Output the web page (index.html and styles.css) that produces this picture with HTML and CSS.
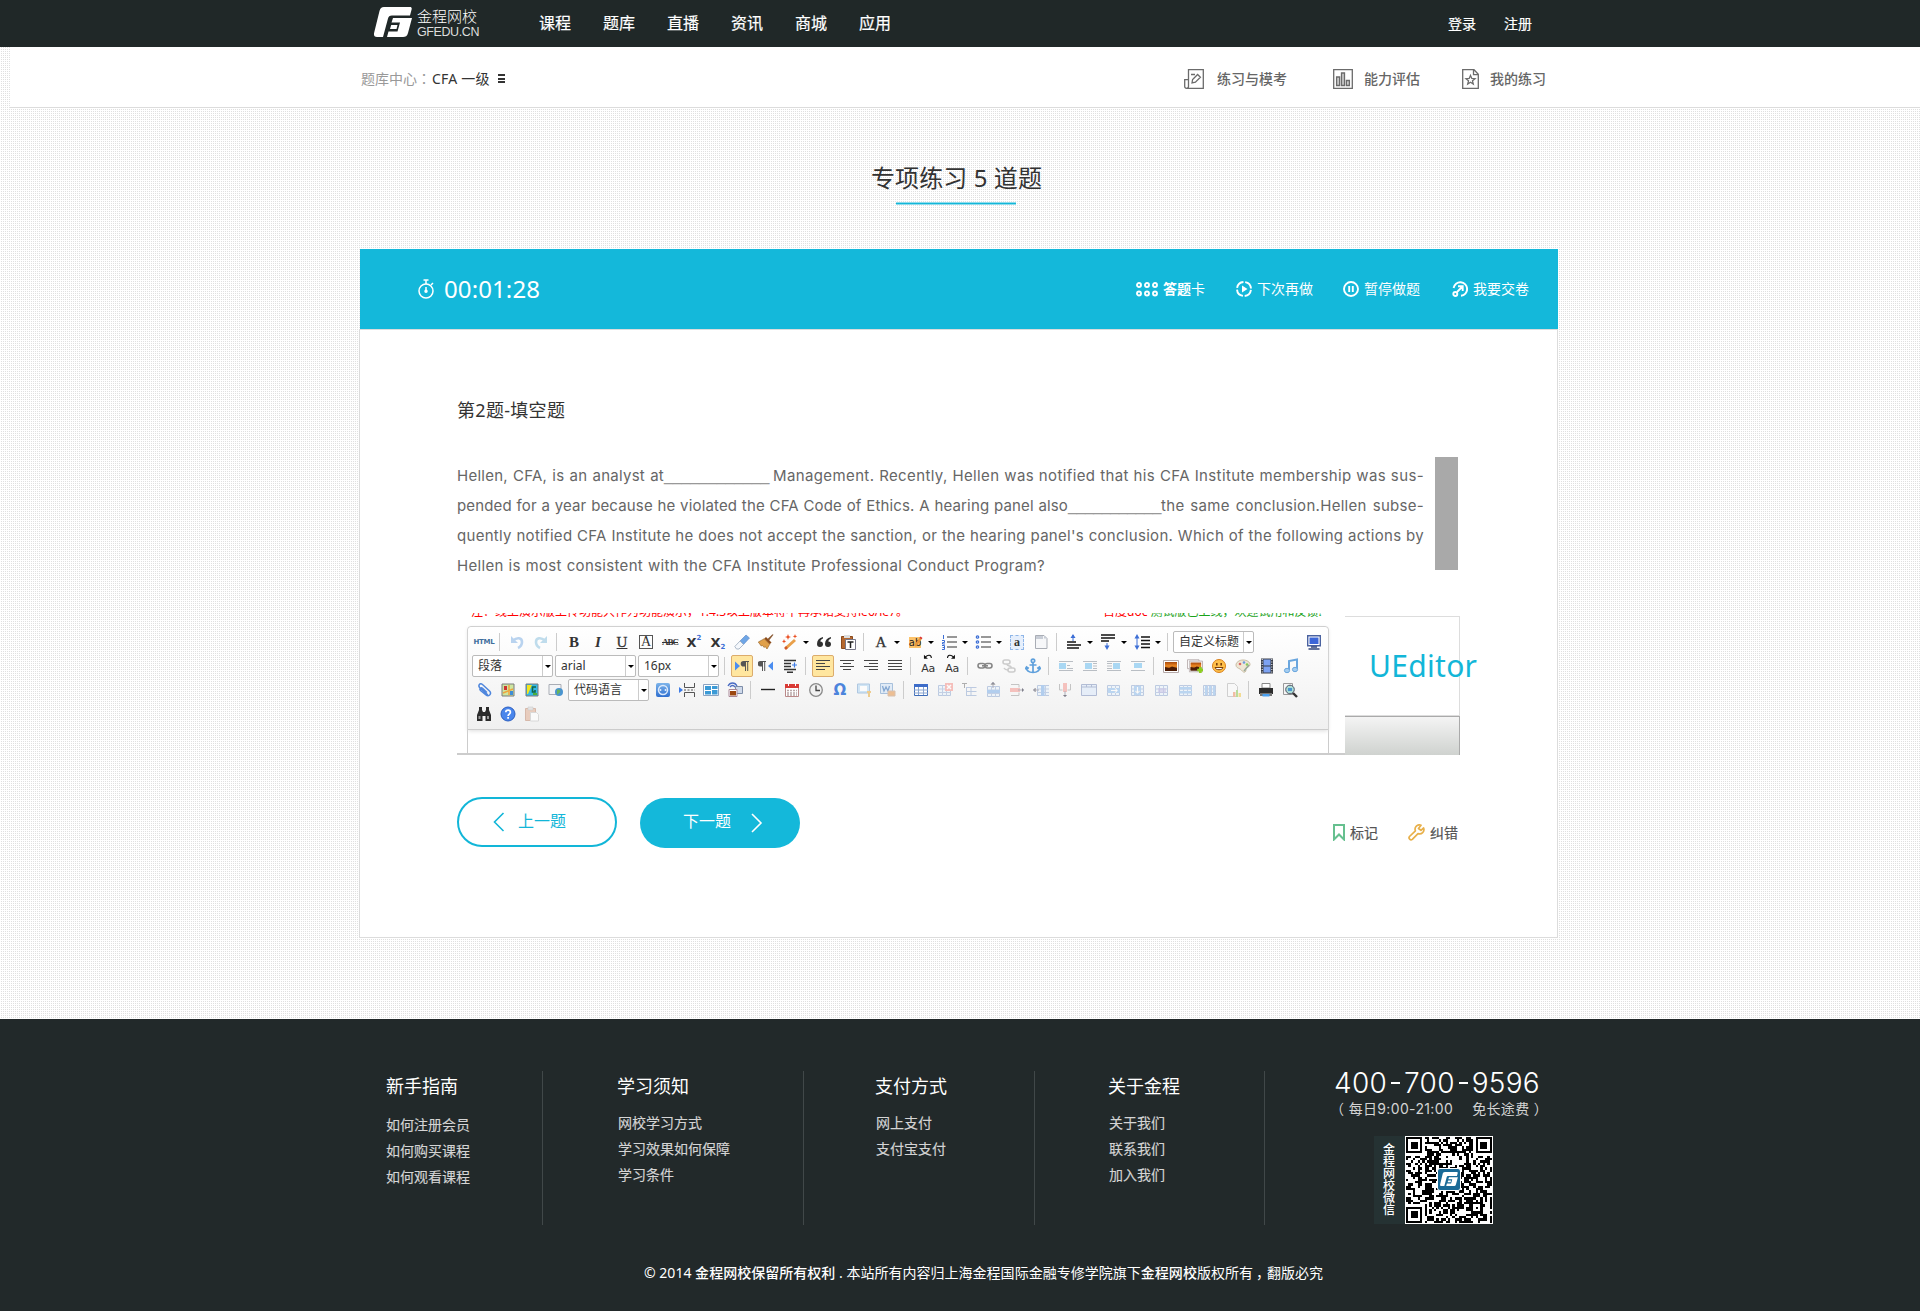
FILE: index.html
```html
<!DOCTYPE html>
<html lang="zh-CN">
<head>
<meta charset="utf-8">
<title>金程网校 - 专项练习</title>
<link rel="stylesheet" href="styles.css">
</head>
<body>
<svg class="sprite" aria-hidden="true">
  <defs>
    <linearGradient id="sky" x1="0" y1="0" x2="0" y2="1"><stop offset="0" stop-color="#7db4ea"/><stop offset="1" stop-color="#2f6fd0"/></linearGradient>
    <linearGradient id="sunset" x1="0" y1="0" x2="0" y2="1"><stop offset="0" stop-color="#a8480c"/><stop offset=".45" stop-color="#f08a22"/><stop offset="1" stop-color="#5b2306"/></linearGradient>
    <symbol id="gmark" viewBox="0 0 38 30"><path d="M10 0H36C37.500 0 38 1 37.600 2.500L36 8.500H18C15.500 8.500 14.500 9.500 14 11.500L9 30H3C0 30-.5 28 .2 25.500L5.500 4C6.200 1.500 7.500 0 10 0Z"/><path d="M19 11H38L34 26C33.200 29 31.500 30 29 30H13L14.500 24.500H23.500L26 15.500H17.500ZM17.200 18H23.500L22.500 22H16Z"/></symbol>
    <symbol id="para" viewBox="0 0 16 16"><path d="M12 3H6.500a2.800 2.800 0 0 0 0 5.600H8V13h1V4h1.200v9h1V4H12Z"/></symbol>
    <symbol id="grid" viewBox="0 0 16 16"><path fill="#eaf3fb" stroke="#9fb4d6" d="M2.500 3.500h12v10h-12z"/><path fill="none" stroke="#a9bcdc" d="M2 7h13M2 10.500h13M6.500 3v11M10.500 3v11"/></symbol>
    <symbol id="float" viewBox="0 0 16 16"><path stroke="#b9bec4" d="M1 3.500h14M1 12.500h14"/></symbol>
    <symbol id="pic" viewBox="0 0 16 16"><path fill="#fff" stroke="#b5a9a9" d="M.5 2.500h15v12H.5z"/><path fill="url(#sunset)" d="M2 4h12v9H2z"/><path fill="#4b1c06" d="M2 9l4 1 3-1.500 5 1.500v3H2z"/></symbol>
  </defs>
</svg>

<header class="topbar">
  <div class="wrap topbar-in">
    <a class="logo">
      <svg width="38" height="30"><use href="#gmark" fill="#fff"/></svg>
      <span class="logo-text"><b>金程网校</b><i>GFEDU.CN</i></span>
    </a>
    <nav class="mainnav"><a>课程</a><a>题库</a><a>直播</a><a>资讯</a><a>商城</a><a>应用</a></nav>
    <div class="login"><a>登录</a><a>注册</a></div>
  </div>
</header>

<div class="subbar">
  <div class="wrap subbar-in">
    <div class="crumb"><span>题库中心<i class="mid" lang="zh-TW">：</i></span><b>CFA 一级</b><i class="burger"></i></div>
    <div class="tools">
      <a class="t1"><svg width="20" height="20" fill="none" stroke="#6b6b6b" stroke-width="1.300"><path d="M4.500.7h14.800v18.600H2.500a1.800 1.800 0 0 1-1.800-1.800V10.700h3.800zM4.500 10v7.500c0 1-.6 1.800-2 1.800"/><path d="M7 5.500h4M8 14l.6-3.500 5-5 2.800 2.700-5 5z"/></svg><span>练习与模考</span></a>
      <a class="t2"><svg width="20" height="20" fill="none" stroke="#6b6b6b" stroke-width="1.300"><path d="M.7.7h18.600v18.600H.7z"/><path fill="#ccc" d="M3.600 8h3v8.500h-3zM8.500 4h3v12.500h-3zM13.400 11.500h3v5h-3z"/></svg><span>能力评估</span></a>
      <a class="t3"><svg width="17" height="20" fill="none" stroke="#6b6b6b" stroke-width="1.300"><path d="M.7.7H12l4.300 4.500v14.100H.7zM11.500 1v4.700h4.800"/><path d="M8.500 6.500l1.300 3 3.200.2-2.500 2.100.8 3.200-2.800-1.700L5.700 15l.8-3.200L4 9.700l3.200-.2z"/></svg><span>我的练习</span></a>
    </div>
  </div>
</div>

<main class="wrap">
  <div class="title"><h1>专项练习 5 道题</h1></div>

  <section class="exam">
    <div class="exambar">
      <div class="timer"><svg width="17" height="20" fill="none" stroke="#fff" stroke-width="1.500"><circle cx="8" cy="12" r="7"/><path d="M8 5V1M5.500 1h5M13 6l2-2M8 8v4"/><circle cx="8" cy="12.300" r="1" fill="#fff"/></svg><span>00:01:28</span></div>
      <div class="acts">
        <a class="a1"><svg width="22" height="15" fill="none" stroke="#fff" stroke-width="1.900"><circle cx="3" cy="3" r="2"/><circle cx="11" cy="3" r="2"/><circle cx="19" cy="3" r="2"/><circle cx="3" cy="11.500" r="2"/><circle cx="11" cy="11.500" r="2"/><circle cx="19" cy="11.500" r="2"/></svg><span><b>答题</b>卡</span></a>
        <a class="a2"><svg width="16" height="16"><circle cx="8" cy="8" r="7" fill="none" stroke="#fff" stroke-width="1.900" stroke-dasharray="9.200 1.800" stroke-dashoffset="-1"/><path fill="#fff" d="M6 4.500v7L11.500 8z"/></svg><span>下次再做</span></a>
        <a class="a3"><svg width="16" height="16" fill="none" stroke="#fff" stroke-width="1.900"><circle cx="8" cy="8" r="7"/><path d="M6.200 5v6M9.800 5v6"/></svg><span>暂停做题</span></a>
        <a class="a4"><svg width="16" height="16" fill="none" stroke="#fff" stroke-width="1.900"><path d="M1.600 7A6.800 6.800 0 1 1 9 14.800M5 11l5.500-5.500M6 5.300h4.700V10"/><circle cx="3.300" cy="13" r="2"/></svg><span>我要交卷</span></a>
      </div>
    </div>

    <div class="panel">
      <h2>第2题-填空题</h2>
      <div class="question">
        <div class="qtext">
          <div class="ln"><span class="w207">Hellen, CFA, is an analyst at</span><u class="w109">____________</u><span class="w651">Management. Recently, Hellen was notified that his CFA Institute membership was sus-</span></div>
          <div class="ln"><span class="w611">pended for a year because he violated the CFA Code of Ethics. A hearing panel also</span><u class="w93">___________</u><span class="w263">the same conclusion.Hellen subse-</span></div>
          <div class="ln"><span class="w967">quently notified CFA Institute he does not accept the sanction, or the hearing panel's conclusion. Which of the following actions by</span></div>
          <div class="ln"><span class="w588">Hellen is most consistent with the CFA Institute Professional Conduct Program?</span></div>
        </div>
        <div class="scroll"></div>
      </div>

      <div class="editor">
        <div class="ed-main">
          <div class="ed-note"><span class="red n1">注：线上演示版上传功能只作为功能演示，1.4.3以上版本将不再承诺支持ie6/ie7。</span><span class="n2"><em class="red">百度doc</em> 测试版已上线，欢迎试用和反馈!</span></div>
          <div class="ed-box">
            <div class="toolbar">
              <div class="row">
                <span class="tb html">HTML</span><i class="sep"></i>
                <span class="tb"><svg viewBox="0 0 16 16"><path fill="none" stroke="#b9d3ef" stroke-width="2.600" d="M4 6.500C8 3 13 3.500 13 8c0 3-2 5-4 6"/><path fill="#b9d3ef" d="M2 2v7h7z"/></svg></span>
                <span class="tb"><svg viewBox="0 0 16 16"><path fill="none" stroke="#bfdcec" stroke-width="2.600" d="M12 6.500C8 3 3 3.500 3 8c0 3 2 5 4 6"/><path fill="#bfdcec" d="M14 2v7H7z"/></svg></span>
                <i class="sep"></i>
                <span class="tb ser">B</span><span class="tb ser it">I</span><span class="tb ser un">U</span><span class="tb ser"><b class="boxed">A</b></span><span class="tb abc">ABC</span><span class="tb xx">X<sup>2</sup></span><span class="tb xx">X<sub>2</sub></span>
                <span class="tb"><svg viewBox="0 0 16 16"><path fill="#6fa6e6" stroke="#5b87c4" stroke-width=".6" d="M6 7l6-6 3.500 3L9.500 10.500z"/><path fill="#f5f8fc" stroke="#9aa9bd" stroke-width=".8" d="M.8 12.500L6 7l3.500 3.500L5 15H2.500z"/></svg></span>
                <span class="tb"><svg viewBox="0 0 16 16"><path fill="#8a5a34" d="M15.500.8L11 6.500 9.500 5 14.500.3z"/><path fill="#8d4c1b" d="M8 3l5.500 5.500-1.800 1.800L6.200 4.800z"/><path fill="#e0a04a" stroke="#8f5a1c" stroke-width=".6" d="M6.200 4.800l5.500 5.500L9 15l-1.800-2.500-1 1L4.500 11.500l-1.300.5L.3 8z"/></svg></span>
                <span class="tb dd"><svg viewBox="0 0 16 16"><path stroke="#e9a04a" stroke-width="3" d="M3.500 14.500L13 6"/><path stroke="#cf5a2a" stroke-width="2.500" d="M3 15l2-2"/><path fill="#ea4b1d" d="M6 0l.8 2.200L9 3l-2.200.8L6 6l-.8-2.200L3 3l2.200-.8zM13 0l.6 1.700 1.700.6-1.700.6L13 4.600l-.6-1.700-1.700-.6 1.700-.6zM2 5l.6 1.700 1.700.6-1.700.6L2 9.600l-.6-1.700L0 7.300l1.400-.6z"/></svg></span>
                <span class="tb"><svg viewBox="0 0 16 16" fill="#2f2f2f"><path d="M7 3C3 4 1 6.500 1 10c0 2 1 3 3 3s3-1.200 3-2.800S6 7.600 4.300 7.600C4.500 6 5.500 5 7 4.500zM15 3c-4 1-6 3.500-6 7 0 2 1 3 3 3s3-1.200 3-2.800-1-2.600-2.700-2.600c.2-1.600 1.200-2.600 2.700-3.100z"/></svg></span>
                <span class="tb"><svg viewBox="0 0 16 16"><path fill="#b5682f" stroke="#8a4a1d" d="M1.500 2.500h11v12h-11z"/><path fill="#ddd" d="M4 1h6v3H4z"/><path fill="#fff" stroke="#778" d="M5.500 5.500h10v10h-10z"/><path stroke="#222" stroke-width="1.500" d="M7.500 8h6M10.500 8v6"/></svg></span>
                <i class="sep"></i>
                <span class="tb dd ser reg">A</span>
                <span class="tb dd"><span class="ab">ab</span><svg class="over" viewBox="0 0 16 16"><path stroke="#e8963a" stroke-width="2.500" d="M8 13l6-8"/><path stroke="#d33" stroke-width="2.500" d="M13.500 5.500l1-1.300"/></svg></span>
                <span class="tb dd"><svg viewBox="0 0 16 16"><path stroke="#333" stroke-width="1.200" d="M6 3h10M6 8h10M6 13h10"/><path stroke="#3d6fd6" fill="none" d="M2.500 1v4M1 6.500h2.500v2H1.500v1.500H4M1 11.500h2.500v4H1M1.500 13.500h2"/></svg></span>
                <span class="tb dd"><svg viewBox="0 0 16 16"><path stroke="#333" stroke-width="1.200" d="M6 3h10M6 8h10M6 13h10"/><g fill="none" stroke="#3d6fd6" stroke-width="1.200"><circle cx="2.500" cy="3" r="1.200"/><circle cx="2.500" cy="8" r="1.200"/><circle cx="2.500" cy="13" r="1.200"/></g></svg></span>
                <span class="tb"><b class="asel">a</b></span>
                <span class="tb"><svg viewBox="0 0 16 16"><path fill="#f6f7f9" stroke="#a9adb5" d="M2.500 1.500h8.500l3 3v10h-11.500z"/><path fill="#c8cdd6" d="M3 2h7v3H3zM11 1.500v3h3z"/></svg></span>
                <i class="sep"></i>
                <span class="tb dd"><svg viewBox="0 0 16 16"><path stroke="#111" stroke-width="1.300" d="M1 8h9M1 11h14M1 14h12"/><path stroke="#3d6fd6" d="M7 1v6"/><path fill="#3d6fd6" d="M4.500 4L7 0l2.500 4z"/></svg></span>
                <span class="tb dd"><svg viewBox="0 0 16 16"><path stroke="#111" stroke-width="1.300" d="M1 1h14M1 4h14M1 7h8"/><path stroke="#3d6fd6" d="M7 9v5"/><path fill="#3d6fd6" d="M4.500 11.500L7 16l2.500-4.500z"/></svg></span>
                <span class="tb dd"><svg viewBox="0 0 16 16"><path stroke="#111" stroke-width="1.300" d="M7 3h9M7 6.500h9M7 10h9M7 13.500h9"/><path stroke="#3d6fd6" d="M3 2v12"/><path fill="#3d6fd6" d="M.5 4.500L3 0l2.500 4.500zM.5 11.500L3 16l2.500-4.500z"/></svg></span>
                <i class="sep"></i><span class="combo">自定义标题</span>
                <span class="tb last"><svg viewBox="0 0 16 16"><path fill="#fff" stroke="#4a62a0" stroke-width="1.400" d="M1.700 1.700h12.600v10H1.700z"/><path fill="#3c66d8" d="M3.500 3.500h9v6.500h-9z"/><path stroke="#33477c" stroke-width="1.500" d="M5 13h6M2.500 15h11"/></svg></span>
              </div>
              <div class="row">
                <span class="combo w80">段落</span><span class="combo w80">arial</span><span class="combo w80">16px</span><i class="sep"></i>
                <span class="tb on"><svg viewBox="0 0 16 16"><use href="#para" x="3" fill="#555"/><path fill="#4b8df0" d="M1 3.500l5 4.500-5 4.500z"/></svg></span>
                <span class="tb"><svg viewBox="0 0 16 16"><use href="#para" x="-4" fill="#555"/><path fill="#4b8df0" d="M15 3.500L10 8l5 4.500z"/></svg></span>
                <span class="tb"><svg viewBox="0 0 16 16"><path stroke="#333" stroke-width="1.400" d="M2 2.500h12M2 5.500h7M2 8.500h7M2 11.500h12M5 14.300h6"/><path stroke="#3d7be6" stroke-width="1.200" d="M10 7h5M12.500 4.500v5"/></svg></span>
                <i class="sep"></i>
                <span class="tb on"><svg viewBox="0 0 16 16" stroke="#444" stroke-width="1.200"><path d="M1 2.500h14M1 5.500h9M1 8.500h14M1 11.500h9"/></svg></span>
                <span class="tb"><svg viewBox="0 0 16 16" stroke="#444" stroke-width="1.200"><path d="M1 2.500h14M4 5.500h8M1 8.500h14M4 11.500h8"/></svg></span>
                <span class="tb"><svg viewBox="0 0 16 16" stroke="#444" stroke-width="1.200"><path d="M1 2.500h14M6 5.500h9M1 8.500h14M6 11.500h9"/></svg></span>
                <span class="tb"><svg viewBox="0 0 16 16" stroke="#444" stroke-width="1.200"><path d="M1 2.500h14M1 5.500h14M1 8.500h14M1 11.500h14"/></svg></span>
                <i class="sep"></i>
                <span class="tb aa">Aa<svg class="over" viewBox="0 0 16 16"><path fill="none" stroke="#111" stroke-width="1.200" d="M6 3.500C9 .5 13 .8 13 4.500"/><path fill="#111" d="M4.500.8v4.500H9z"/></svg></span>
                <span class="tb aa">Aa<svg class="over" viewBox="0 0 16 16"><path fill="none" stroke="#111" stroke-width="1.200" d="M11 3.500C8 .5 4 .8 4 4.500"/><path fill="#111" d="M12.500.8v4.500H8z"/></svg></span>
                <i class="sep"></i>
                <span class="tb"><svg viewBox="0 0 16 16" fill="none" stroke="#868686" stroke-width="1.600"><rect x="1" y="5.500" width="7" height="4.500" rx="2.200"/><rect x="8" y="5.500" width="7" height="4.500" rx="2.200"/><path d="M5 7.800h6"/></svg></span>
                <span class="tb"><svg viewBox="0 0 16 16" fill="none" stroke="#ccc" stroke-width="1.600"><rect x="2" y="2" width="7" height="4" rx="2"/><rect x="7" y="10" width="7" height="4" rx="2"/><path d="M6 6c0 3 5 1 4 4M3 10c1 2 2 2 4 2"/></svg></span>
                <span class="tb"><svg viewBox="0 0 16 16" fill="none" stroke="#5fa0dc" stroke-width="1.700"><circle cx="8" cy="2.800" r="1.700"/><path d="M8 4.500V15M4.500 7h7M1 9c.5 4 3.500 5.500 7 5.500s6.500-1.500 7-5.500M.3 11.500L1.500 9l2.300 1.500M15.700 11.500L14.500 9l-2.300 1.500"/></svg></span>
                <i class="sep"></i>
                <span class="tb"><svg viewBox="0 0 16 16"><use href="#float"/><path fill="#a9d7f3" d="M1 5h7v6H1z"/><path stroke="#b9bec4" d="M9 7.500h3M9 10.500h6"/></svg></span>
                <span class="tb"><svg viewBox="0 0 16 16"><use href="#float"/><path fill="#a9d7f3" d="M3 5h7v6H3z"/><path stroke="#b9bec4" d="M11 5.500h4M11 8h4M11 10.500h4"/></svg></span>
                <span class="tb"><svg viewBox="0 0 16 16"><use href="#float"/><path fill="#a9d7f3" d="M7 5h7v6H7z"/><path stroke="#b9bec4" d="M1 5.500h5M1 8h5M1 10.500h5"/></svg></span>
                <span class="tb"><svg viewBox="0 0 16 16"><use href="#float"/><path fill="#a9d7f3" d="M4 5h8v5H4z"/></svg></span>
                <i class="sep"></i>
                <span class="tb"><svg viewBox="0 0 16 16"><use href="#pic"/></svg></span>
                <span class="tb"><svg viewBox="0 0 18 16"><path fill="#fff" stroke="#b5a9a9" d="M.5 1h13v10H.5z"/><use href="#pic" x="2" y="0" width="16" height="16"/><path stroke="#8ccf1e" stroke-width="3" d="M15 9v7M11.500 12.500h7"/></svg></span>
                <span class="tb"><svg viewBox="0 0 16 16"><circle cx="8" cy="8" r="6.500" fill="#ffc04a" stroke="#d9801c"/><path fill="#7a3e0a" d="M5 5h1.600v2.500H5zM9.400 5H11v2.500H9.400z"/><path fill="#fff" stroke="#7a3e0a" d="M4 9.500h8c-.5 3-7.500 3-8 0z"/></svg></span>
                <span class="tb"><svg viewBox="0 0 16 16"><path fill="#efe6d4" stroke="#c9bca3" d="M8 2c4 0 7 2 7 4.500S12 9 11 10s1 3-1 4-3-2-5-3-4-1.500-4-4S4 2 8 2z"/><circle cx="5" cy="6" r="1.300" fill="#d66"/><circle cx="9" cy="4.500" r="1.300" fill="#6b9be0"/><circle cx="12" cy="6.500" r="1.300" fill="#8c5"/><path stroke="#9a9" stroke-width="1.500" d="M9 13l5-6"/></svg></span>
                <span class="tb"><svg viewBox="0 0 16 16"><path fill="#3a3f4a" d="M2 .5h12v15H2z"/><path fill="#7da2f2" d="M4.500 1.500h7v6h-7zM4.500 8.500h7v6h-7z"/><path stroke="#fff" stroke-width="1" stroke-dasharray="1 1.500" d="M3.200 1v14M12.800 1v14"/></svg></span>
                <span class="tb"><svg viewBox="0 0 16 16"><path fill="none" stroke="#6aa6de" stroke-width="2" d="M6 12V3l8-1.500V11"/><ellipse cx="4" cy="12.500" rx="2.600" ry="2.200" fill="#a4cdf0" stroke="#6aa6de"/><ellipse cx="12" cy="11.500" rx="2.600" ry="2.200" fill="#a4cdf0" stroke="#6aa6de"/></svg></span>
              </div>
              <div class="row">
                <span class="tb"><svg viewBox="0 0 16 16"><path fill="none" stroke="#4e86dd" stroke-width="1.500" d="M12 13L4 6C1.500 3.500 4 .5 6.500 2.500l7 6.500c2.500 2.500-.5 6.500-3.500 4L4.500 8.500C3 7 5 5 6.500 6.300L11 10.500"/></svg></span>
                <span class="tb"><svg viewBox="0 0 16 16"><path fill="#cde6a0" stroke="#7a7a7a" d="M2 2h12v12H2z"/><path stroke="#f1a33c" stroke-width="1.500" d="M3 11l10-4M9 3v10"/><path fill="#3d8ed8" d="M10 9h3v4h-3z"/><path fill="#c33" d="M4 4h3v4H4z"/></svg></span>
                <span class="tb"><svg viewBox="0 0 16 16"><path fill="#32b8e8" stroke="#7a7a7a" d="M2 2h12v12H2z"/><path fill="#f5e51b" d="M3 3h5L4 12H3z"/><path fill="none" stroke="#164" stroke-width="1.600" d="M12 5H8.500v5H11V8"/><path fill="#4ab03a" d="M9 11h4v2H9z"/></svg></span>
                <span class="tb"><svg viewBox="0 0 16 16"><path fill="#f3f4f6" stroke="#a9adb5" d="M1 2.500h12v10H1z"/><circle cx="11" cy="10" r="4" fill="#4a94cf"/><path fill="#6ab55a" d="M9 8c2-1 4 0 3 2s-2 1-3 3z"/></svg></span>
                <span class="combo w80 code">代码语言</span>
                <span class="tb"><svg viewBox="0 0 16 16"><rect x="1" y="1" width="14" height="14" rx="2" fill="url(#sky)"/><circle cx="8" cy="8" r="4.500" fill="none" stroke="#dbe9fb" stroke-width="1.500"/><path stroke="#dbe9fb" stroke-width="1.500" d="M5.500 7v2M10.500 7v2"/></svg></span>
                <span class="tb"><svg viewBox="0 0 16 16" fill="none" stroke="#555"><path d="M5.500 1v4.500h10V1M5.500 15v-4.500h10V15"/><path stroke-dasharray="2 1.500" d="M5 8h11"/><path fill="#3d7be6" stroke="none" d="M0 5l4 3-4 3z"/></svg></span>
                <span class="tb"><svg viewBox="0 0 16 16"><path fill="#fff" stroke="#8ba3c2" d="M.5 2.500h15v11H.5z"/><path fill="#3b9ad6" d="M2 4h6v4H2zM2 9h6v3.500H2zM9 4h5.500v3H9zM9 8h5.500v4.500H9z"/></svg></span>
                <span class="tb"><svg viewBox="0 0 16 16"><path fill="none" stroke="#4a6cc4" stroke-width="1.300" d="M1 4c2-4 7-4 9 0M3 5c1.500-2 3.500-2 5 0"/><path fill="#cfd9ea" stroke="#7d8da8" d="M8.500 4.500h7v7h-7z"/><path fill="#fff" stroke="#a89" d="M2 7.500h8v7H2z"/><path fill="#9c4710" d="M3 9h6v4.500H3z"/></svg></span>
                <i class="sep"></i>
                <span class="tb"><svg viewBox="0 0 16 16"><path stroke="#222" stroke-width="1.400" d="M1 7.500h14"/></svg></span>
                <span class="tb"><svg viewBox="0 0 16 16"><path fill="#fff" stroke="#b88" d="M1.500 2.500h13v12h-13z"/><path fill="#d93a35" d="M1 2h14v4H1z"/><path stroke="#fff" d="M4.500 0v4M11.500 0v4"/><path stroke="#b9a6a6" stroke-width="1.500" stroke-dasharray="2 1" d="M3 8.500h10M3 11h10M3 13h10"/></svg></span>
                <span class="tb"><svg viewBox="0 0 16 16"><circle cx="8" cy="8" r="6.300" fill="#f1f1f1" stroke="#8a8a8a" stroke-width="1.300"/><path fill="none" stroke="#444" stroke-width="1.300" d="M8 3.500V8.500H12"/></svg></span>
                <span class="tb omega">Ω</span>
                <span class="tb faded"><svg viewBox="0 0 16 16"><path fill="#bcdcf5" stroke="#8aafd6" d="M1.500 2h12v9h-12z"/><path fill="#fff" d="M4 4h7v5H4z"/><path fill="#e9b75a" d="M11 9h4v2h-1v4h-2v-4h-1z"/></svg></span>
                <span class="tb faded"><svg viewBox="0 0 16 16"><path fill="#d6e6f7" stroke="#7fa5cf" d="M.5 1.500h12v10H.5z"/><path fill="none" stroke="#4a7fc0" stroke-width="1.300" d="M2.500 4l1.500 5 2-4 2 4 1.500-5"/><path fill="#e8a15f" stroke="#c9a58a" d="M8 9h7v5H8z"/></svg></span>
                <i class="sep"></i>
                <span class="tb"><svg viewBox="0 0 16 16"><path fill="#fff" stroke="#3d6cb9" d="M1.500 2.500h13v11h-13z"/><path fill="#3d6cc9" d="M1 2h14v3H1z"/><path stroke="#8aa5d0" d="M1 8h14M1 11h14M5.500 5v8M10.500 5v8"/></svg></span>
                <span class="tb faded"><svg viewBox="0 0 16 16"><use href="#grid" x="-1"/><path fill="#f5a19b" d="M8 1h8v8H8z"/><path stroke="#fff" stroke-width="1.500" d="M10 3l4 4M14 3l-4 4"/></svg></span>
                <span class="tb faded"><svg viewBox="0 0 16 16"><path stroke="#888" d="M1 1.500h5M3.500 1v5"/><path fill="none" stroke="#9fb4d6" d="M5.500 5.500h10M5.500 9.500h10M5.500 13.500h10M5.500 5v9M10 5v9"/></svg></span>
                <span class="tb faded"><svg viewBox="0 0 16 16"><use href="#grid" y="1"/><path fill="#8fb9ea" d="M2 8h13v3H2z"/><path stroke="#889" d="M8 0v6M6 2.500L8 0l2 2.500"/></svg></span>
                <span class="tb faded"><svg viewBox="0 0 16 16"><path fill="none" stroke="#aaa" d="M2 2.500h8v3M2 13.500h8v-3"/><path fill="#f4a6a0" d="M1 6h10v4H1z"/><path stroke="#889" d="M9 8h6M13 6l2 2-2 2"/></svg></span>
                <span class="tb faded"><svg viewBox="0 0 16 16"><use href="#grid" x="2"/><path fill="#8fb9ea" d="M8 3h3.500v11H8z"/><path stroke="#889" d="M0 8h6M2.500 6L.5 8l2 2"/></svg></span>
                <span class="tb faded"><svg viewBox="0 0 16 16"><path fill="none" stroke="#aaa" d="M2.500 2v6h3M13.500 2v6h-3"/><path fill="#f4a6a0" d="M6 1h4v9H6z"/><path stroke="#889" d="M8 9v6M6 13l2 2 2-2"/></svg></span>
                <span class="tb faded"><svg viewBox="0 0 16 16"><path fill="#dfeafa" stroke="#8f9fc4" d="M.5 2.500h15v11H.5z"/><path stroke="#8f9fc4" d="M1 5h14M5.500 2v3M10.500 2v3"/></svg></span>
                <span class="tb faded"><svg viewBox="0 0 16 16"><use href="#grid"/><path fill="#9cc4ee" d="M3 6h12v5H3z"/><path stroke="#fff" stroke-width="1.200" d="M6 8.500h6M10 6.500l2 2-2 2"/></svg></span>
                <span class="tb faded"><svg viewBox="0 0 16 16"><use href="#grid"/><path fill="#9cc4ee" d="M5 4h7v9H5z"/><path stroke="#fff" stroke-width="1.200" d="M8.500 5v6M6.500 9l2 2 2-2"/></svg></span>
                <span class="tb faded"><svg viewBox="0 0 16 16"><use href="#grid"/><path fill="#b5aede" opacity=".6" d="M5 6h8v5H5z"/></svg></span>
                <span class="tb faded"><svg viewBox="0 0 16 16"><use href="#grid"/><path fill="#9cc4ee" d="M3 5h12v2.500H3zM3 9h12v2.500H3z"/></svg></span>
                <span class="tb faded"><svg viewBox="0 0 16 16"><use href="#grid"/><path fill="#9cc4ee" d="M4 4h2v9H4zM8 4h2v9H8zM12 4h2v9h-2z"/></svg></span>
                <span class="tb faded"><svg viewBox="0 0 16 16"><path fill="#fafafa" stroke="#bbb" d="M2.500 1.500h7l3 3v10h-10z"/><path fill="#f0a07a" d="M8 10h2.500v5H8z"/><path fill="#9ccf6a" d="M11 8h2v7h-2z"/><path fill="#f2d060" d="M13.500 11H16v4h-2.500z"/></svg></span>
                <i class="sep"></i>
                <span class="tb"><svg viewBox="0 0 16 16"><path fill="#fff" stroke="#888" d="M4 1.500h8V6H4z"/><path fill="#2d2d2d" d="M1 6h14v6H1z"/><path fill="#777" d="M2 11h12v3H2z"/><path fill="#4aa0f0" d="M4.500 12h7v2.500h-7z"/></svg></span>
                <span class="tb"><svg viewBox="0 0 16 16"><path fill="#f6f6f6" stroke="#999" d="M1.500 1.500h9v11h-9z"/><circle cx="8" cy="7.500" r="4.300" fill="#a9dcd5" stroke="#556"/><path fill="#4a94cf" d="M6 6h4v3H6z"/><path stroke="#333" stroke-width="2.400" d="M11 11l4 4"/></svg></span>
              </div>
              <div class="row">
                <span class="tb"><svg viewBox="0 0 16 16" fill="#2b2b2b"><path d="M3 1h3v3l1 2h2l1-2V1h3v3l2 5v6H9.500v-5h-3v5H1V9l2-5z"/><path fill="#999" d="M2.500 10h2v3h-2zM11 10h2v3h-2z"/></svg></span>
                <span class="tb"><svg viewBox="0 0 16 16"><circle cx="8" cy="8" r="7" fill="#4a86ec" stroke="#2c5fc0"/><path fill="none" stroke="#fff" stroke-width="1.700" d="M5.800 6.300c0-3 4.600-3 4.600 0 0 1.700-2.300 1.800-2.300 3.700M8.100 11v1.800"/></svg></span>
                <span class="tb faded"><svg viewBox="0 0 16 16"><path fill="#e3b9a2" stroke="#c99b84" d="M1.500 2.500h10v12h-10z"/><path fill="#ddd" stroke="#bbb" stroke-width=".6" d="M4 1h5v3H4z"/><path fill="#fff" stroke="#ccc" d="M6.500 6.500h6l2 2v6.500h-8z"/></svg></span>
              </div>
            </div>
          </div>
        </div>
        <div class="ed-side"><div class="side-top"><span>UEditor</span></div><div class="side-bot"></div></div>
      </div>

      <div class="foot-acts">
        <a class="btn prev"><svg width="12" height="20" fill="none" stroke="#12b6d8" stroke-width="1.600"><path d="M10.500 1L1.500 10l9 9"/></svg><span>上一题</span></a>
        <a class="btn next"><span>下一题</span><svg width="12" height="20" fill="none" stroke="#fff" stroke-width="1.600"><path d="M1 1l9 9-9 9"/></svg></a>
        <div class="marks">
          <a class="m1"><svg width="12" height="17" fill="none" stroke="#66c08f" stroke-width="2"><path d="M1 1h10v14.500L6 10.500l-5 5z"/></svg>标记</a>
          <a class="m2"><svg width="17" height="17" fill="none" stroke="#e8b04a" stroke-width="1.700" stroke-linejoin="round"><path d="M13 1.200a4.300 4.300 0 0 0-5.600 5.600L1.500 12.500c-1.500 2 1 4.200 2.800 2.800L10 9.600A4.300 4.300 0 0 0 15.600 4L13 6.300 10.500 4.500z"/></svg>纠错</a>
        </div>
      </div>
    </div>
  </section>
</main>

<footer>
  <div class="wrap cols">
    <div class="col c1"><h3>新手指南</h3><a>如何注册会员</a><a>如何购买课程</a><a>如何观看课程</a></div>
    <div class="col c2"><h3>学习须知</h3><a>网校学习方式</a><a>学习效果如何保障</a><a>学习条件</a></div>
    <div class="col c3"><h3>支付方式</h3><a>网上支付</a><a>支付宝支付</a></div>
    <div class="col c4"><h3>关于金程</h3><a>关于我们</a><a>联系我们</a><a>加入我们</a></div>
    <div class="contact">
      <div class="phone"><span>400</span><i></i><span>700</span><i></i><span>9596</span></div>
      <div class="hours"><span>（ 每日9:00-21:00</span><span>免长途费 ）</span></div>
      <div class="wechat"><div class="wx-label">金程网校微信</div><div class="qr"><svg id="qr" width="88" height="88" viewBox="-0.5 -0.5 38 38" shape-rendering="crispEdges"></svg><div class="qr-logo"><svg width="18" height="14"><use href="#gmark" fill="#fff"/></svg></div></div></div>
    </div>
  </div>
  <p class="copy">© 2014 <b>金程网校保留所有权利</b> . 本站所有内容归上海金程国际金融专修学院旗下<b>金程网校</b>版权所有<i class="comma">，</i>翻版必究</p>
</footer>
<script src="qr.js"></script>
</body>
</html>
```
FILE: styles.css
```css
* { box-sizing: border-box; }
body, h1, h2, h3, p { margin: 0; font-weight: 400; }
i, em { font-style: normal; }
b { font-weight: 500; }
body {
  font-family: "Noto Sans", "Noto Sans CJK SC", sans-serif;
  font-size: 14px;
  color: #333;
  background: conic-gradient(from 90deg at 1px 1px, #e0e0e0 25%, #fff 0) 0 0 / 2px 2px;
}
svg { display: block; flex: none; }
.sprite { position: absolute; width: 0; height: 0; }
.wrap { width: 1200px; margin-left: 359px; }
.mid { font-family: "Noto Sans CJK TC", sans-serif; line-height: 1; }
.comma { padding-left: 3px; margin-right: -3px; }

.topbar { height: 47px; background: #202828; color: #fff; }
.topbar-in { display: flex; height: 47px; }
.logo { display: flex; width: 180px; padding: 7px 0 0 15px; gap: 5px; }
.logo-text { display: flex; flex-direction: column; }
.logo-text b { font-size: 15px; line-height: 19px; font-weight: 300; }
.logo-text i { font: 12.500px/13px "Liberation Sans", sans-serif; letter-spacing: -.4px; color: #ddd; }
.mainnav { display: flex; gap: 32px; font-size: 16px; line-height: 46px; -webkit-text-stroke: .2px; }
.login { display: flex; gap: 28px; margin-left: 557px; line-height: 47px; -webkit-text-stroke: .2px; }

.subbar { height: 61px; margin-left: 10px; background: #fff; border-bottom: 1px solid #dcdcdc; }
.subbar-in { margin-left: 349px; display: flex; height: 60px; align-items: center; padding-top: 3px; }
.crumb { display: flex; width: 825px; padding-left: 2px; color: #999; align-items: center; }
.crumb span { width: 71px; white-space: nowrap; }
.crumb span, .crumb b { margin-top: -2px; }
.crumb b { color: #333; font-weight: 400; width: 66px; white-space: nowrap; letter-spacing: .2px; }
.burger { width: 7px; height: 9px; background: repeating-linear-gradient(#333 0 2px, #fff 2px 3.500px); }
.tools { display: flex; color: #666; font-weight: 500; }
.tools a { display: flex; align-items: center; }
.tools span { margin-top: -2px; }
.t1 { gap: 13px; width: 149px; }
.t2 { gap: 11px; width: 129px; }
.t3 { gap: 11px; }

.title { height: 141px; padding-top: 49px; display: flex; flex-direction: column; align-items: center; padding-right: 6px; }
.title h1 { font-size: 24px; line-height: 42px; letter-spacing: .1px; padding-left: 1px; }
.title::after { content: ""; width: 120px; height: 3px; margin-top: 3px; background: linear-gradient(#8fdcec 33%, #12b6d8 33% 66%, #8fdcec 66%); }

.exambar { margin-left: 1px; width: 1198px; height: 80px; background: #14b8da; color: #fff; display: flex; justify-content: space-between; align-items: center; padding-left: 58px; }
.timer { display: flex; align-items: center; gap: 9px; font-size: 24px; }
.timer span { margin-top: -2px; letter-spacing: .1px; }
.acts { display: flex; width: 422px; }
.acts a { display: flex; align-items: center; gap: 5px; }
.acts span { margin-top: -2px; }
.a1 { width: 100px; } .a2 { width: 107px; } .a3 { width: 109px; }
.acts b { font-weight: 700; }

.panel { width: 1199px; height: 609px; background: #fff; border: 1px solid #dcdcdc; padding: 63px 0 0 97px; }
.panel h2 { font-size: 18px; line-height: 34px; letter-spacing: .3px; }
.question { display: flex; width: 1001px; height: 113px; margin-top: 30px; justify-content: space-between; }
.qtext { font: 15px/30px Inter, Arial, sans-serif; color: #666; padding-top: 4px; }
.ln { display: flex; height: 30px; white-space: nowrap; }
.ln span { text-align-last: justify; white-space: normal; height: 30px; }
.ln u { text-decoration: none; font: 16px/30px "Liberation Sans", sans-serif; color: #999; }
.w207 { width: 207px; letter-spacing: .25px; }
.w109 { width: 109px; letter-spacing: -.12px; }
.w651 { width: 651px; letter-spacing: .38px; }
.w611 { width: 611px; letter-spacing: .15px; }
.w93 { width: 93px; letter-spacing: -.45px; }
.w263 { width: 263px; letter-spacing: .3px; }
.w967 { width: 967px; letter-spacing: .3px; }
.w588 { width: 588px; letter-spacing: .32px; }
.scroll { width: 23px; height: 113px; background: #a9a9a9; }

.editor { display: flex; height: 142px; margin-top: 43px; }
.ed-main { width: 888px; border-bottom: 2px solid #ccc; overflow: hidden; }
.ed-note { height: 8px; overflow: hidden; display: flex; align-items: flex-end; font-size: 12px; line-height: 16px; padding-left: 14px; color: #1ba31b; white-space: nowrap; }
.ed-note span { height: 17px; }
.red { color: #f00; }
.n1 { width: 632px; }
.ed-box { margin: 5px 0 0 10px; width: 862px; height: 140px; border: 1px solid #ccc; border-radius: 4px; background: #fff; }
.toolbar { height: 103px; padding: 4px 0 0 4px; border-bottom: 1px solid #ccc; border-radius: 4px 4px 0 0; background: linear-gradient(#fff, #f0f0f0); box-shadow: 0 1px 4px #ddd; }
.row { display: flex; height: 24px; padding-bottom: 2px; padding-right: 2px; align-items: center; }
.tb { width: 24px; height: 22px; flex: none; display: flex; align-items: center; justify-content: center; position: relative; white-space: nowrap; color: #333; }
.tb svg { width: 16px; height: 16px; }
.tb .over { position: absolute; left: 4px; top: 2px; }
.dd { width: 34px; padding-right: 10px; }
.dd::after, .combo::after { content: ""; position: absolute; right: 3px; top: 10px; border: 3px solid transparent; border-top: 3px solid #000; border-bottom: 0; }
.sep { width: 9px; height: 18px; flex: none; background: linear-gradient(#ccc, #ccc) 3px 0 / 1px 18px no-repeat; }
.on::before { content: ""; position: absolute; inset: 0 1px; background: #ffe69f; border: 1px solid #dcac6c; border-radius: 2px; }
.on svg { position: relative; }
.faded { opacity: .65; }
.html { font: 700 7px "DejaVu Sans", sans-serif; color: #3f6f9c; letter-spacing: -.3px; }
.ser { font: 700 15px "Liberation Serif", serif; }
.it { font-style: italic; }
.un { font-weight: 400; text-decoration: underline; -webkit-text-stroke: .3px; }
.reg { font-weight: 400; -webkit-text-stroke: .3px; }
.boxed { font: 14px/12px "Liberation Serif", serif; border: 1px solid #555; padding: 0 1px; }
.abc { font: 700 9px "Liberation Serif", serif; letter-spacing: -1px; text-decoration: line-through; }
.xx { font: 700 13px "DejaVu Sans", sans-serif; }
.xx sup, .xx sub { font-size: 7px; color: #3d6fd6; }
.xx sup { margin-bottom: 8px; } .xx sub { margin-top: 9px; }
.ab { font: 10px/11px "DejaVu Sans", sans-serif; background: #fbc36b; color: #222; }
.asel { font: 700 12px/12px "Liberation Serif", serif; background: #e6effc; border: 1px dashed #8fb6e8; padding: 0 3px 1px; }
.aa { font: 11px "DejaVu Sans", sans-serif; padding-top: 4px; letter-spacing: -.3px; }
.tb.aa .over { top: -1px; width: 14px; height: 14px; }
.omega { font: 700 15px "DejaVu Sans", sans-serif; color: #4c84dc; }
.combo { position: relative; width: 81px; height: 22px; border: 1px solid #bbb; border-radius: 2px; background: linear-gradient(#ccc, #ccc) right 9px top 0 / 1px 22px no-repeat #fff; font-size: 12px; line-height: 20px; padding-left: 5px; white-space: nowrap; flex: none; }
.combo::after { right: 1px; top: 9px; }
.w80 { margin-right: 2px; }
.last { margin-left: auto; }
.ed-side { width: 115px; padding-top: 3px; }
.side-top { height: 100px; border: 1px solid #ddd; border-left: 0; font-size: 30px; line-height: 98px; color: #12b6d8; padding-left: 24px; letter-spacing: .3px; }
.side-bot { height: 39px; border: 1px solid #aaa; border-width: 1px 1px 0 0; background: linear-gradient(#f4f4f4, #cfd2cf); }

.foot-acts { display: flex; margin-top: 42px; }
.btn { width: 160px; height: 50px; border-radius: 25px; display: flex; align-items: center; font-size: 16px; }
.prev span { margin-top: -4px; }
.next span { margin-top: -6px; }
.prev { border: 2px solid #12b6d8; color: #12b6d8; padding: 0 0 1px 34px; gap: 13px; }
.next { margin: 1px 0 0 23px; background: #14b8da; color: #fff; padding-left: 43px; gap: 20px; }
.marks { display: flex; margin: 25px 0 0 533px; height: 20px; color: #555; -webkit-text-stroke: .2px; }
.marks a { display: flex; align-items: center; gap: 5px; }
.m1 { width: 75px; }

footer { margin-top: 81px; height: 293px; background: #22292a; color: #fff; }
.cols { display: flex; padding-top: 52px; height: 206px; }
.col { border-right: 1px solid #414849; height: 154px; }
.col h3 { font-size: 18px; line-height: 30px; margin-bottom: 9px; }
.col a { display: block; line-height: 26px; color: #d4d4d4; -webkit-text-stroke: .15px; }
.c1 { width: 184px; padding-left: 27px; } .c1 h3 { margin-bottom: 11px; }
.c2 { width: 261px; padding-left: 75px; }
.c3 { width: 231px; padding-left: 72px; }
.c4 { width: 230px; padding-left: 74px; }
.c2 h3, .c3 h3, .c4 h3 { margin-left: -1px; }
.contact { padding-left: 69px; }
.phone { display: flex; align-items: center; height: 24px; width: 206px; justify-content: space-between; font: 300 28px/24px Inter, sans-serif; letter-spacing: .3px; }
.phone i { width: 9px; height: 2px; background: #fff; }
.hours { display: flex; gap: 19px; line-height: 26px; color: #d4d4d4; margin: 1px 0 0 -4px; white-space: nowrap; font-family: Inter, "Noto Sans CJK SC", sans-serif; letter-spacing: .35px; }
.wechat { display: flex; margin: 14px 0 0 40px; }
.wx-label { width: 31px; height: 88px; background: #253233; font-size: 12px; font-weight: 500; line-height: 12px; padding: 8px 9px; word-break: break-all; }
.qr { width: 88px; height: 88px; background: #fff; position: relative; }
.qr-logo { position: absolute; left: 32px; top: 32px; width: 24px; height: 23px; background: #1a6a97; border: 1px solid #fff; border-radius: 3px; padding: 3px 2px; }
.copy { padding-left: 644px; line-height: 20px; margin-top: 38px; white-space: nowrap; letter-spacing: .02px; }
```
FILE: qr.js
```js
// Draws the WeChat code: 37 x 37 modules, three finders and one alignment mark.
const N = 37;
const svg = document.getElementById('qr');
let seed = 20140;
const rnd = () => (seed = (seed * 1103515245 + 12345) % 2147483648) / 2147483648;
const ring = (x, y, cx, cy) => Math.max(Math.abs(x - cx), Math.abs(y - cy));
let d = '';
for (let y = 0; y < N; y++) {
  for (let x = 0; x < N; x++) {
    let on = rnd() < 0.53;
    for (const [cx, cy] of [[3, 3], [N - 4, 3], [3, N - 4]]) {
      const r = ring(x, y, cx, cy);
      if (r <= 4) on = r === 3 || r <= 1;
    }
    const a = ring(x, y, 30, 30);
    if (a <= 2) on = a !== 1;
    if (on) d += `M${x} ${y}h1v1h-1z`;
  }
}
const p = document.createElementNS('http://www.w3.org/2000/svg', 'path');
p.setAttribute('d', d);
svg.appendChild(p);
```
